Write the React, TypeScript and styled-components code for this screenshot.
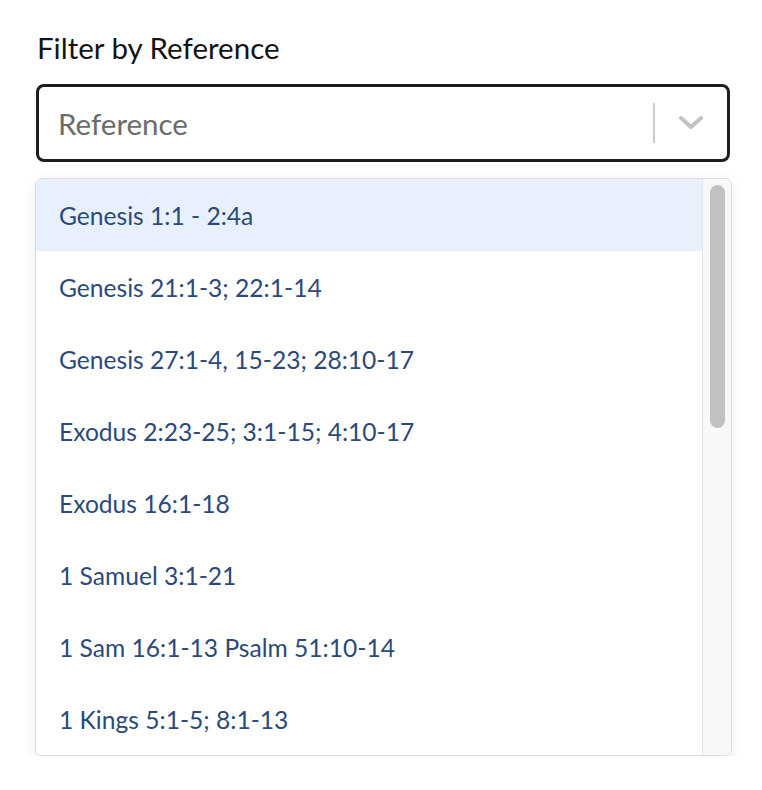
import React from "react";
import styled, { createGlobalStyle } from "styled-components";

const Global = createGlobalStyle`
  html, body { margin: 0; padding: 0; background: #ffffff; }
  body { font-family: Lato, "Noto Sans", sans-serif; }
`;

const Page = styled.div`
  padding: 30px 30px 0 36px;
  width: 696px;
`;

const Label = styled.div`
  font-size: 29.5px;
  line-height: 36px;
  color: #141414;
  margin-left: 1px;
  margin-bottom: 18px;
`;

const Control = styled.div`
  box-sizing: border-box;
  height: 78px;
  width: 694px;
  border: 3px solid #1e1e1e;
  border-radius: 8px;
  display: flex;
  align-items: center;
`;

const Placeholder = styled.div`
  flex: 1;
  padding-left: 19px;
  font-size: 29.5px;
  color: #6b6b6b;
`;

const Separator = styled.span`
  width: 2px;
  height: 40px;
  background: #cccccc;
`;

const Indicator = styled.div`
  width: 72px;
  display: flex;
  align-items: center;
  justify-content: center;
`;

const Menu = styled.div`
  box-sizing: border-box;
  margin-top: 16px;
  margin-left: -1px;
  width: 697px;
  border: 1px solid #dcdcdc;
  border-radius: 7px;
  box-shadow: 0 4px 14px rgba(0, 0, 0, 0.08);
  overflow: hidden;
  display: flex;
`;

const List = styled.div`
  flex: 1;
  height: 576px;
`;

const Track = styled.div`
  width: 29px;
  box-sizing: border-box;
  background: #f8f8f8;
  border-left: 1px solid #e4e4e4;
  padding: 6px 6px 0 7px;
`;

const Thumb = styled.div<{ $size: number }>`
  height: ${(p) => p.$size}px;
  border-radius: 8px;
  background: #c1c1c1;
`;

const Option = styled.div<{ $active?: boolean }>`
  height: 72px;
  display: flex;
  align-items: center;
  padding-left: 23px;
  font-size: 24.6px;
  color: #2b4a79;
  background: ${(p) => (p.$active ? "#e9f0fd" : "#ffffff")};
`;

const items = [
  "Genesis 1:1 - 2:4a",
  "Genesis 21:1-3; 22:1-14",
  "Genesis 27:1-4, 15-23; 28:10-17",
  "Exodus 2:23-25; 3:1-15; 4:10-17",
  "Exodus 16:1-18",
  "1 Samuel 3:1-21",
  "1 Sam 16:1-13 Psalm 51:10-14",
  "1 Kings 5:1-5; 8:1-13",
];

export default function App() {
  return (
    <Page>
      <Global />
      <Label>Filter by Reference</Label>
      <Control>
        <Placeholder>Reference</Placeholder>
        <Separator />
        <Indicator>
          <svg width="26" height="16" viewBox="0 0 26 16">
            <path d="M3 3 L13 12 L23 3" fill="none" stroke="#c2c2c2" strokeWidth="4" strokeLinecap="round" strokeLinejoin="round" />
          </svg>
        </Indicator>
      </Control>
      <Menu>
        <List>
          {items.map((t, i) => (
            <Option key={t} $active={i === 0}>{t}</Option>
          ))}
        </List>
        <Track>
          <Thumb $size={243} />
        </Track>
      </Menu>
    </Page>
  );
}
